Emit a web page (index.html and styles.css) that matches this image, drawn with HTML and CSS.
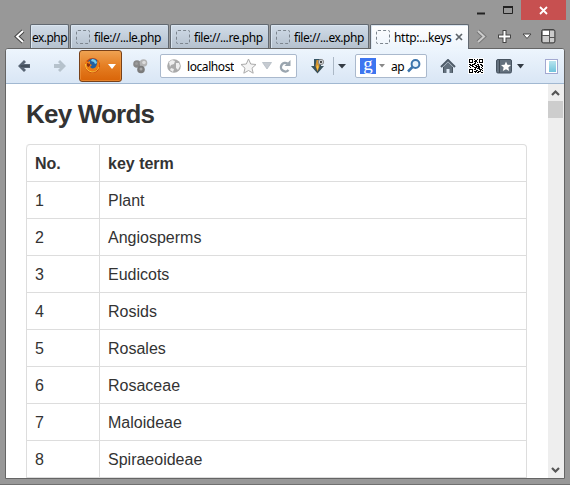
FILE: index.html
```
<!DOCTYPE html>
<html lang="en">
<head>
<meta charset="utf-8">
<title>Key Words</title>
<link rel="stylesheet" href="styles.css">
</head>
<body>
<div class="window">
  <header class="titlebar">
    <svg class="minimise" width="8" height="9"><path d="M0 7.500h8" stroke="#222" stroke-width="2"/></svg>
    <svg class="maximise" width="11" height="9"><path d="M.5 1v6.500h9V1" fill="none" stroke="#222"/><path d="M0 1h10" stroke="#222" stroke-width="2"/></svg>
    <div class="close"><svg width="9" height="9"><path d="M1 1l7 7M8 1L1 8" stroke="#fff" stroke-width="1.800"/></svg></div>
  </header>
  <nav class="tabs">
    <svg class="scroll-left" width="11" height="15"><path d="M9 2L3 7.500 9 13" fill="none" stroke="#444" stroke-width="4"/><path d="M9 2L3 7.500 9 13" fill="none" stroke="#fff" stroke-width="2"/></svg>
    <div class="tab cut"><span>ex.php</span></div>
    <div class="tab"><i class="blank"></i><span>file://...le.php</span></div>
    <div class="tab"><i class="blank"></i><span>file://...re.php</span></div>
    <div class="tab"><i class="blank"></i><span>file://...ex.php</span></div>
    <div class="tab active"><i class="blank"></i><span>http:...keys</span><svg width="8" height="8"><path d="M1 1l6 6M7 1L1 7" stroke="#5d646a" stroke-width="1.700"/></svg></div>
    <svg class="scroll-right" width="11" height="15"><path d="M2 2l6 5.500L2 13" fill="none" stroke="#777" stroke-width="4"/><path d="M2 2l6 5.500L2 13" fill="none" stroke="#ccc" stroke-width="2"/></svg>
    <svg class="plus" width="13" height="13"><path d="M6.500 0v13M0 6.500h13" stroke="#444" stroke-width="4"/><path d="M6.500 1v11M1 6.500h11" stroke="#fff" stroke-width="2"/></svg>
    <svg class="list" width="10" height="7"><path d="M1 1h8L5 5.500z" fill="#fff" stroke="#444"/></svg>
    <svg class="groups" width="15" height="15"><rect x=".5" y=".5" width="13.500" height="13.500" rx="2" fill="#8a8a8a" stroke="#444"/><path d="M2 2h6v4H2z" fill="#fff"/><path d="M9 2h4v6H9zM2 7h6v6H2zM9 9h4v4H9z" fill="#ccc"/><path d="M1 6.500h7.500V1M8.500 6v8M9 8.500h5" fill="none" stroke="#555"/></svg>
  </nav>
  <main class="frame">
    <div class="toolbar">
      <svg class="back" width="13" height="14"><path d="M0 7l6-6 2 2-2 2h6v4H6l2 2-2 2z" fill="#586575"/><path d="M2.500 7h9" stroke="#3d4855" stroke-width="1.500"/></svg>
      <svg class="forward" width="13" height="14"><path d="M12 7L6 1 4 3l2 2H0v4h6l-2 2 2 2z" fill="#b6c2cc"/></svg>
      <div class="firefox">
        <svg width="17" height="17"><circle cx="8.500" cy="8.500" r="7.500" fill="#c8440c"/><circle cx="9" cy="7" r="5.500" fill="#235f9f"/><path d="M8 2q4 0 5 4l-2 1-1-2-3-1z" fill="#79cdec"/><path d="M2 4l2 1 2-1 0 3 2 1-2 2 2 1.500q4 0 5-4.500l.500-4q4 5 0 9-5 5-10 1Q-.5 9 2 4z" fill="#ef7d12"/><path d="M1.500 7q0 7 6.500 8 5 0 7-5" fill="none" stroke="#fbc63a"/><path d="M3 6l3 1 0 1.500-1.500 1.500L3 9z" fill="#8c3010"/></svg>
        <svg class="ff-caret" width="8" height="5"><path d="M0 0h8L4 5z" fill="#fff"/></svg>
      </div>
      <svg class="cluster" width="15" height="15"><circle cx="4" cy="5" r="3.800" fill="#888"/><circle cx="10.500" cy="4" r="3.800" fill="#b3b3b3"/><circle cx="8" cy="10.500" r="3.800" fill="#7b7b7b"/><circle cx="3.500" cy="4.500" r="1.500" fill="#9c9c9c"/><circle cx="11" cy="3.500" r="1.800" fill="#dcdcdc"/><circle cx="8" cy="10" r="1.500" fill="#aaa"/></svg>
      <div class="url">
        <svg width="14" height="14"><circle cx="7" cy="7" r="6.800" fill="#aaa"/><path d="M2 3l3-2 3 1-1 3-3 1-1 2zM9 4l3 0 1 3-2 4-2-2 0-2zM4 9l3 1-1 3-3-2z" fill="#eee"/></svg>
        <span>localhost</span>
        <svg class="star" width="17" height="16"><path d="M8.500 1l2.200 5 5.300.5-4 3.700 1.200 5-4.700-2.700-4.700 2.700 1.200-5-4-3.700 5.300-.5z" fill="#f4f4f4" stroke="#aaa"/></svg>
        <svg class="drop" width="10" height="8"><path d="M.5.500h9L5 7z" fill="#c6cbd1" stroke="#aeb6be" stroke-width=".7"/></svg>
        <svg class="reload" width="12" height="13"><path d="M9.500 10A4.300 4.300 0 1 1 8.500 3.500" fill="none" stroke="#9aa5af" stroke-width="2.400"/><path d="M5.500 6h6V0z" fill="#9aa5af"/></svg>
      </div>
      <svg class="download" width="14" height="16"><defs><linearGradient id="dl" x2="0" y2="1"><stop offset="0" stop-color="#355464"/><stop offset="1" stop-color="#3d5055"/></linearGradient></defs><path d="M3 1h7v7h3l-6.500 7.500L0 8h3z" fill="url(#dl)"/><path d="M5.500 2h2l1 6-2 5.500L4.500 8z" fill="#d39433"/><path d="M6.500 7l1 2-1 3.500-1-3.500z" fill="#ffc43c"/><circle cx="10" cy="4" r="2.700" fill="#d7dce0" stroke="#777" stroke-width=".8"/><circle cx="10" cy="4" r="1.200" fill="#444"/></svg>
      <i class="divider"></i>
      <svg class="dl-caret" width="8" height="5"><path d="M0 0h8L4 4.500z" fill="#333b44"/></svg>
      <div class="search">
        <div class="google">g</div>
        <svg class="s-caret" width="6" height="4"><path d="M0 0h6L3 3.500z" fill="#888"/></svg>
        <span>ap</span>
        <svg class="glass" width="14" height="14"><circle cx="8.500" cy="5" r="3.900" fill="#e7f2fb" stroke="#3b74ac" stroke-width="2"/><path d="M5.500 8L1 12.500" stroke="#3b74ac" stroke-width="2.500"/></svg>
      </div>
      <svg class="home" width="16" height="15"><path d="M1 8l7-7 7 7" fill="none" stroke="#4d5a67" stroke-width="2"/><path d="M3 8l5-5 5 5v6H9.500v-4h-3v4H3z" fill="#63717e"/><path d="M3.500 8v5.500M12.500 8v5.500" stroke="#46525e"/></svg>
      <svg class="qr" width="16" height="16"><path fill="#fff" d="M0 0h16v16H0z"/><g fill="none" stroke="#000" shape-rendering="crispEdges"><path d="M1 1.500h4M6 1.500h1M9 1.500h1M11 1.500h4M1 2.500h1M4 2.500h1M7 2.500h2M11 2.500h1M14 2.500h1M1 3.500h1M4 3.500h1M6 3.500h3M11 3.500h1M14 3.500h1M1 4.500h4M7 4.500h1M9 4.500h1M11 4.500h4M6 5.500h2M1 6.500h2M4 6.500h3M9 6.500h2M12 6.500h2M2 7.500h3M7 7.500h2M10 7.500h1M13 7.500h2M1 8.500h1M4 8.500h2M8 8.500h4M14 8.500h1M2 9.500h1M6 9.500h3M10 9.500h2M13 9.500h1M7 10.500h1M9 10.500h3M14 10.500h1M1 11.500h4M6 11.500h2M11 11.500h3M1 12.500h1M4 12.500h1M8 12.500h2M12 12.500h1M14 12.500h1M1 13.500h1M4 13.500h1M6 13.500h3M10 13.500h3M1 14.500h4M7 14.500h1M9 14.500h2M13 14.500h2"/></g></svg>
      <svg class="bookmarks" width="16" height="15"><rect x=".5" y=".5" width="15" height="13.500" rx="1.500" fill="#64717e" stroke="#465360"/><path d="M3.500 1v13" stroke="#3e4954"/><path d="M10 2.500l1.400 3.200 3.600.3-2.700 2.400.9 3.600L10 10.200 6.800 12l.9-3.600L5 6l3.600-.3z" fill="#fff"/></svg>
      <svg class="b-caret" width="8" height="5"><path d="M0 0h7L3.500 4.500z" fill="#333b44"/></svg>
      <svg class="sidebar" width="13" height="15"><defs><linearGradient id="sb" x2="0" y2="1"><stop stop-color="#b8e4ee"/><stop offset="1" stop-color="#71c4dc"/></linearGradient></defs><rect x=".5" y=".5" width="12" height="14" fill="#fff" stroke="#a3a9d1"/><path d="M4 2h7v11H4z" fill="url(#sb)"/></svg>
    </div>
    <div class="viewport">
      <section class="page">
        <h1>Key Words</h1>
        <table>
          <thead><tr><th class="num">No.</th><th>key term</th></tr></thead>
          <tbody>
            <tr><td>1</td><td>Plant</td></tr>
            <tr><td>2</td><td>Angiosperms</td></tr>
            <tr><td>3</td><td>Eudicots</td></tr>
            <tr><td>4</td><td>Rosids</td></tr>
            <tr><td>5</td><td>Rosales</td></tr>
            <tr><td>6</td><td>Rosaceae</td></tr>
            <tr><td>7</td><td>Maloideae</td></tr>
            <tr><td>8</td><td>Spiraeoideae</td></tr>
          </tbody>
        </table>
      </section>
      <aside class="scrollbar">
        <svg width="9" height="7"><path d="M1 6l3.500-3.500L8 6" fill="none" stroke="#555" stroke-width="2.200"/></svg>
        <i class="thumb"></i>
        <svg class="down" width="9" height="7"><path d="M1 1l3.500 3.500L8 1" fill="none" stroke="#555" stroke-width="2.200"/></svg>
      </aside>
    </div>
  </main>
</div>
</body>
</html>
```
FILE: styles.css
```
* { box-sizing: border-box; }
body { margin: 0; overflow: hidden; background: #989898; }
svg { display: block; flex: none; }
.window {
  width: 570px;
  height: 485px;
  display: flex;
  flex-direction: column;
  border-bottom: 1px solid #707070;
  font: 12px/16px "Noto Sans", sans-serif;
  color: #000;
}
.titlebar { height: 24px; flex: none; display: flex; justify-content: flex-end; padding-right: 4px; }
.minimise { margin: 6px 18px 0 0; }
.maximise { margin: 6px 7px 0 0; }
.close { width: 45px; height: 20px; display: flex; align-items: center; justify-content: center; background: #c75050; }

.tabs { height: 24px; flex: none; display: flex; align-items: flex-start; padding-left: 14px; }
.scroll-left { margin: 5px 5px 0 0; }
.tab {
  width: 99px;
  height: 24px;
  flex: none;
  display: flex;
  align-items: center;
  margin-right: 1px;
  padding-left: 5px;
  border: 1px solid #626971;
  border-bottom: 0;
  border-radius: 2px 2px 0 0;
  background: linear-gradient(#d1dce8, #b5c1ce);
  box-shadow: inset 1px 1px #dbe6f1;
  white-space: nowrap;
}
.tab span { font-size: 12px; letter-spacing: -.45px; margin-top: 3px; }
.tab.cut { width: 39px; padding-left: 1px; }
.tab.cut span { letter-spacing: -.55px; }
.tab.active { height: 25px; background: linear-gradient(#fff, #ecf4fc); z-index: 1; position: relative; }
.tab.active span { margin-top: 2px; letter-spacing: -.3px; }
.blank { width: 14px; height: 14px; flex: none; margin-right: 4px; border: 1px dashed #7c858e; border-radius: 2px; }
.tab.active svg { margin-left: 3px; }
.scroll-right { margin: 5px 11px 0 6px; }
.plus { margin: 6px 11px 0 0; }
.list { margin: 9px 9px 0 0; }
.groups { margin: 5px 0 0; }

.frame {
  width: 560px;
  height: 431px;
  margin-left: 5px;
  display: flex;
  flex-direction: column;
  border: 1px solid #656565;
  border-radius: 3px 3px 0 0;
  background: #fff;
}
.toolbar {
  height: 35px;
  flex: none;
  display: flex;
  align-items: center;
  padding-left: 12px;
  border-bottom: 1px solid #a1b8d1;
  border-radius: 2px 2px 0 0;
  background: linear-gradient(#edf5fd, #d9e6f5);
}
.forward { margin-left: 23px; }
.firefox {
  width: 43px;
  height: 32px;
  flex: none;
  display: flex;
  align-items: center;
  margin-left: 12px;
  padding-left: 4px;
  border: 1px solid #784119;
  border-radius: 3px;
  background: linear-gradient(#efa252, #e57e22 50%, #d96408);
  box-shadow: inset 0 0 0 1px #f1a25080;
}
.firefox svg { margin-top: -1px; }
.firefox .ff-caret { margin: 1px 0 0 7px; }
.cluster { margin-left: 11px; }
.url, .search {
  height: 24px;
  flex: none;
  display: flex;
  align-items: center;
  border: 1px solid #aab9cd;
  border-radius: 2px;
  background: #fff;
}
.url { width: 137px; margin-left: 12px; padding-left: 6px; }
.url span { width: 47px; margin: 2px 0 0 6px; overflow: hidden; letter-spacing: -.42px; white-space: nowrap; }
.star { margin-left: 6px; }
.drop { margin-left: 5px; }
.reload { margin-left: 7px; }
.download { margin-left: 14px; }
.divider { width: 1px; height: 18px; margin-left: 8px; background: #abb8c6; }
.dl-caret { margin-left: 4px; }
.search { width: 72px; margin-left: 9px; padding-left: 4px; }
.google {
  width: 16px;
  height: 16px;
  background: #3d75f0;
  color: #fff;
  font: 19px/11px "Liberation Serif", serif;
  text-align: center;
}
.s-caret { margin-left: 3px; }
.search span { margin: 2px 3px 0 6px; letter-spacing: -.5px; }
.home { margin-left: 13px; }
.qr { margin-left: 12px; }
.bookmarks { margin-left: 12px; }
.b-caret { margin-left: 5px; }
.sidebar { margin-left: 20px; }

.viewport { height: 394px; display: flex; overflow: hidden; }
.page { width: 542px; padding: 15px 21px 0 20px; font-family: "Liberation Sans", Arial, sans-serif; color: #333; }
h1 { margin: 0 0 15px; font-size: 26px; line-height: 30px; letter-spacing: -.8px; }
table {
  width: 501px;
  border: 1px solid #ddd;
  border-left: 0;
  border-radius: 4px 4px 0 0;
  border-collapse: separate;
  border-spacing: 0;
  table-layout: fixed;
  font-size: 16px;
  line-height: 20px;
}
th, td { height: 37px; padding: 9px 8px 7px; border-left: 1px solid #ddd; border-top: 1px solid #ddd; text-align: left; }
th { height: 36px; border-top: 0; }
th:first-child { width: 73px; border-top-left-radius: 4px; }
.scrollbar { width: 16px; height: 394px; display: flex; flex-direction: column; align-items: center; padding: 5px 1px 4px 0; background: #eee; }
.thumb { width: 15px; height: 17px; margin-top: 5px; background: #cdcdcd; }
.down { margin-top: auto; }
```
